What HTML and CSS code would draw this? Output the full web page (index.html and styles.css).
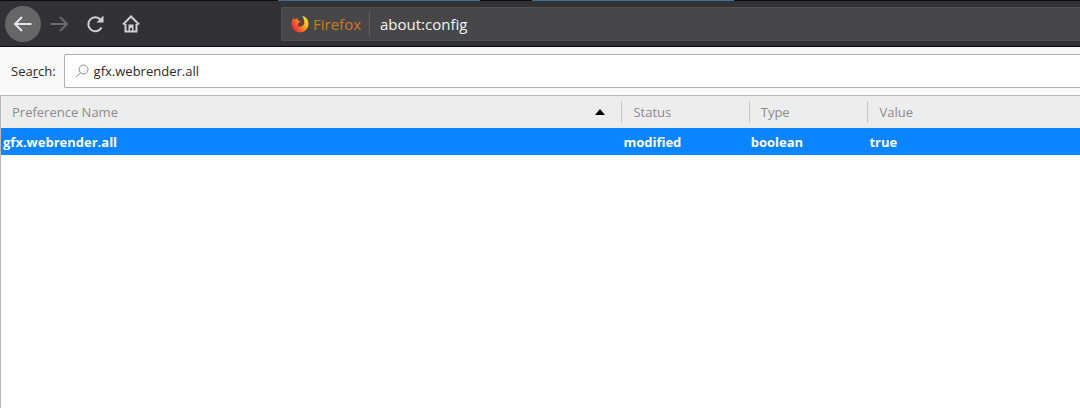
FILE: index.html
```html
<!DOCTYPE html>
<html lang="en">
<head>
    <meta charset="UTF-8">
    <meta name="viewport" content="width=device-width, initial-scale=1.0">
    <title>about:config</title>
    <link rel="stylesheet" href="styles.css">
</head>
<body>
    <div class="tab-strip">
        <div class="tab tab-first"></div>
        <div class="tab"></div>
    </div>

    <header class="toolbar">
        <nav class="nav-buttons">
            <button class="nav-btn back" aria-label="Back">
                <svg width="20" height="20" viewBox="0 0 20 20"><path d="M18.5 10H2M9 3L2 10l7 7"/></svg>
            </button>
            <button class="nav-btn forward" aria-label="Forward" disabled>
                <svg width="20" height="20" viewBox="0 0 20 20"><path d="M1.5 10H18M11 3l7 7-7 7"/></svg>
            </button>
            <button class="nav-btn" aria-label="Reload">
                <svg width="20" height="20" viewBox="0 0 20 20"><path d="M16.5 13.5A7 7 0 1 1 15.5 5.500"/><path class="solid" d="M18.500 1.500v7H11.500z"/></svg>
            </button>
            <button class="nav-btn" aria-label="Home">
                <svg width="20" height="20" viewBox="0 0 20 20"><path d="M2 10.5L10 2.500l8 8M4.500 10v7.500h11V10"/><path class="solid" d="M7.500 10.500h5v7h-1.500V14H9v3.500H7.500z"/></svg>
            </button>
        </nav>
        <div class="urlbar">
            <div class="identity">
                <svg class="firefox-logo" width="18" height="18" viewBox="0 0 18 18">
                    <defs>
                        <linearGradient id="flame" x1="1" y1="0.2" x2="0.1" y2="0.8">
                            <stop offset="0" stop-color="#ffe640"/>
                            <stop offset="0.3" stop-color="#ffb52a"/>
                            <stop offset="0.6" stop-color="#ff7424"/>
                            <stop offset="1" stop-color="#e6253f"/>
                        </linearGradient>
                    </defs>
                    <path fill="url(#flame)" d="M11.500.5c3.500 1.500 6 4.500 6 8.500A8.400 8.400 0 0 1 9 17.400 8.400 8.400 0 0 1 .5 9C.5 6 1.500 4 2.500 2.500L3.500 4.500 6 3.200l1.200 2.400 2.300.6-1.700 1.800c-1.800.8-1.300 3.500 1.200 3.500 2.500 0 4.300-1.500 4.300-4.300 0-2.700-1.300-4.200-1.800-6.700z"/>
                    <path fill="#8a3030" d="M8.500 7.500l3-1c1.200 1.500.2 3.800-1.700 3.800-1.700 0-2.200-1.800-1.300-2.800z"/>
                </svg>
                <span>Firefox</span>
            </div>
            <input class="url-input" type="text" aria-label="Address" value="about:config">
        </div>
    </header>

    <main>
        <div class="search-row">
            <label for="search">Sea<u>r</u>ch:</label>
            <div class="search-box">
                <svg width="14" height="14" viewBox="0 0 14 14"><circle cx="8.500" cy="5.500" r="4.500"/><path d="M5.500 9L1 13"/></svg>
                <input type="text" id="search" value="gfx.webrender.all">
            </div>
        </div>

        <div class="config-tree">
            <table>
                <colgroup>
                    <col class="col-name">
                    <col class="col-status">
                    <col class="col-type">
                    <col>
                </colgroup>
                <thead>
                    <tr>
                        <th scope="col" aria-sort="ascending"><div class="head">Preference Name <svg width="10" height="6" viewBox="0 0 10 6"><path d="M0 6l5-6 5 6z"/></svg></div></th>
                        <th scope="col"><div class="head">Status</div></th>
                        <th scope="col"><div class="head">Type</div></th>
                        <th scope="col"><div class="head">Value</div></th>
                    </tr>
                </thead>
                <tbody>
                    <tr class="selected">
                        <td>gfx.webrender.all</td>
                        <td>modified</td>
                        <td>boolean</td>
                        <td>true</td>
                    </tr>
                </tbody>
            </table>
        </div>
    </main>
</body>
</html>
```
FILE: styles.css
```css
* {
    box-sizing: border-box;
}
body {
    margin: 0;
    min-height: 100vh;
    display: flex;
    flex-direction: column;
    background: #f9f9fa;
    color: #2a2a2a;
    font-family: "Open Sans", "Noto Sans", sans-serif;
    font-size: 13px;
}
input {
    min-width: 0;
    padding: 0;
    border: none;
    outline: none;
    background: transparent;
    color: inherit;
    font: inherit;
}

/* bottom edge of the tabs */
.tab-strip {
    display: flex;
    gap: 52px;
    height: 1px;
    background: #0c0c0d;
}
.tab {
    width: 202px;
    background: #3d6c95;
}
.tab-first {
    margin-left: 278px;
}

.toolbar {
    display: flex;
    align-items: center;
    height: 46px;
    background: #323234;
    border-bottom: 1px solid #0c0c0d;
}
.nav-buttons {
    display: flex;
    flex: none;
    width: 281px;
    padding-left: 5px;
}
.nav-btn {
    display: flex;
    align-items: center;
    justify-content: center;
    width: 36px;
    height: 36px;
    padding: 0;
    border: none;
    border-radius: 50%;
    background: transparent;
    color: #d0d0d2;
}
.nav-btn svg {
    fill: none;
    stroke: currentColor;
    stroke-width: 2;
}
.nav-btn .solid {
    fill: currentColor;
    stroke: none;
}
.back {
    background: #666667;
    color: #e4e4e6;
}
.forward {
    color: #6c6c6f;
}
.urlbar {
    display: flex;
    flex: 1;
    align-items: center;
    height: 34px;
    padding-left: 9px;
    border: 1px solid #505053;
    border-right: none;
    border-radius: 2px 0 0 2px;
    background: #474749;
    font-size: 15px;
}
.identity {
    display: flex;
    align-items: center;
    gap: 4px;
    height: 24px;
    padding-right: 8px;
    border-right: 1px solid #606063;
    color: #cf7a1d;
}
.url-input {
    flex: 1;
    padding-left: 10px;
    color: #f4f4f6;
}

main {
    display: flex;
    flex: 1;
    flex-direction: column;
}
.search-row {
    display: flex;
    align-items: center;
    gap: 8px;
    padding: 7px 0 7px 11px;
}
.search-box {
    display: flex;
    flex: 1;
    align-items: center;
    gap: 5px;
    height: 34px;
    padding-left: 10px;
    border: 1px solid #b1b1b5;
    border-right: none;
    border-radius: 2px 0 0 2px;
    background: #fff;
}
.search-box svg {
    fill: none;
    stroke: #8c8c8c;
    stroke-width: 1;
}
.search-box input {
    flex: 1;
}

.config-tree {
    flex: 1;
    border: 1px solid #b8b8bb;
    border-width: 1px 0 0 1px;
    background: #fff;
}
table {
    width: 100%;
    table-layout: fixed;
    border-collapse: collapse;
}
.col-name {
    width: 57.5%;
}
.col-status {
    width: 11.8%;
}
.col-type {
    width: 11%;
}
th {
    height: 32px;
    padding: 0;
    background: #eeedee;
    color: #8a8a8d;
    font-weight: normal;
    text-align: left;
}
.head {
    display: flex;
    align-items: center;
    justify-content: space-between;
    height: 22px;
    padding: 0 16px 0 11px;
}
th + th .head {
    border-left: 1px solid #c4c4c6;
}
.head svg {
    fill: #000;
}
td {
    height: 27px;
    padding: 0 2px;
    font-weight: bold;
}
.selected {
    background: #0a84ff;
    color: #fff;
}
```
